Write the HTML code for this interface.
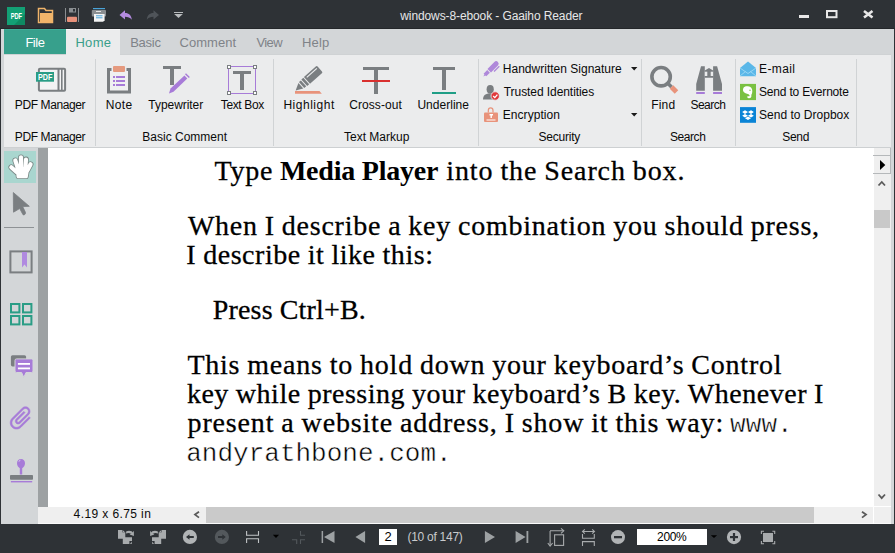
<!DOCTYPE html>
<html><head><meta charset="utf-8"><style>
html,body{margin:0;padding:0;width:895px;height:553px;overflow:hidden;background:#d3d6d8}
body>div{position:absolute}
.t{white-space:pre}
svg{position:absolute;left:0;top:0}
</style></head><body>
<div style="left:0px;top:0px;width:895px;height:28px;background:#2e3236;"></div>
<div style="left:0px;top:28px;width:895px;height:1px;background:#24272a;"></div>
<div style="left:0px;top:29px;width:895px;height:524px;background:#d3d6d8;"></div>
<div style="left:0px;top:29px;width:1px;height:524px;background:#2e3236;"></div>
<div style="left:894px;top:29px;width:1px;height:524px;background:#2e3236;"></div>
<div style="left:4px;top:29px;width:62px;height:26px;background:#37a08c;"></div>
<div style="left:4px;top:29px;width:62px;height:1px;background:#3fae98;"></div>
<div style="left:66px;top:29px;width:54px;height:26px;background:#ebeced;"></div>
<div style="left:66px;top:29px;width:54px;height:1px;background:#f6f6f7;"></div>
<div style="left:4px;top:54px;width:887px;height:1px;background:#cfd2d4;"></div>
<div style="left:66px;top:54px;width:54px;height:1px;background:#ebeced;"></div>
<div style="left:4px;top:55px;width:887px;height:92px;background:#ebeced;"></div>
<div style="left:4px;top:147px;width:887px;height:1px;background:#cdd0d2;"></div>
<div style="left:95px;top:59px;width:1px;height:87px;background:#d0d3d5;"></div>
<div style="left:273px;top:59px;width:1px;height:87px;background:#d0d3d5;"></div>
<div style="left:478px;top:59px;width:1px;height:87px;background:#d0d3d5;"></div>
<div style="left:641px;top:59px;width:1px;height:87px;background:#d0d3d5;"></div>
<div style="left:735px;top:59px;width:1px;height:87px;background:#d0d3d5;"></div>
<div style="left:856px;top:59px;width:1px;height:87px;background:#d0d3d5;"></div>
<div style="left:4px;top:148px;width:34px;height:376px;background:#d3d6d8;"></div>
<div style="left:4px;top:151px;width:32px;height:32px;background:#a9d6cf;"></div>
<div style="left:4px;top:227px;width:30px;height:1px;background:#8e9295;"></div>
<div style="left:38px;top:148px;width:10px;height:359px;background:#9da1a3;"></div>
<div style="left:48px;top:148px;width:826px;height:359px;background:#ffffff;"></div>
<div style="left:874px;top:148px;width:17px;height:359px;background:#efefef;"></div>
<div style="left:873px;top:155px;width:17px;height:1px;background:#b5b8ba;"></div>
<div style="left:873px;top:173px;width:17px;height:1px;background:#b5b8ba;"></div>
<div style="left:890px;top:148px;width:1px;height:26px;background:#b5b8ba;"></div>
<div style="left:874px;top:210px;width:16px;height:18px;background:#c9c9c9;"></div>
<div style="left:38px;top:507px;width:853px;height:17px;background:#fafafa;"></div>
<div style="left:38px;top:507px;width:836px;height:16px;background:#efefef;"></div>
<div style="left:206px;top:507px;width:608px;height:16px;background:#cacaca;"></div>
<div style="left:874px;top:507px;width:17px;height:16px;background:#efefef;"></div>
<div style="left:873px;top:507px;width:1px;height:17px;background:#ffffff;"></div>
<div style="left:874px;top:506px;width:17px;height:1px;background:#ffffff;"></div>
<div style="left:0px;top:524px;width:895px;height:29px;background:#2e3236;"></div>
<div style="left:379px;top:529px;width:18px;height:16px;background:#ffffff;"></div>
<div style="left:637px;top:529px;width:70px;height:16px;background:#ffffff;"></div>
<div class="t" style="left:400.3px;top:9.1px;font-family:'Liberation Sans';font-size:12px;line-height:15px;letter-spacing:-0.107px;word-spacing:0px;color:#e6e7e8;font-weight:normal;">windows-8-ebook - Gaaiho Reader</div>
<div class="t" style="left:25.4px;top:34.8px;font-family:'Liberation Sans';font-size:13px;line-height:16px;letter-spacing:-0.467px;word-spacing:0px;color:#ffffff;font-weight:normal;">File</div>
<div class="t" style="left:75.4px;top:34.9px;font-family:'Liberation Sans';font-size:13px;line-height:16px;letter-spacing:0.333px;word-spacing:0px;color:#3a9e8a;font-weight:normal;">Home</div>
<div class="t" style="left:130.2px;top:35.0px;font-family:'Liberation Sans';font-size:13px;line-height:16px;letter-spacing:-0.25px;word-spacing:0px;color:#7f8388;font-weight:normal;">Basic</div>
<div class="t" style="left:179.5px;top:35.0px;font-family:'Liberation Sans';font-size:13px;line-height:16px;letter-spacing:0.033px;word-spacing:0px;color:#7f8388;font-weight:normal;">Comment</div>
<div class="t" style="left:256.5px;top:35.0px;font-family:'Liberation Sans';font-size:13px;line-height:16px;letter-spacing:-0.6px;word-spacing:0px;color:#7f8388;font-weight:normal;">View</div>
<div class="t" style="left:302.1px;top:35.0px;font-family:'Liberation Sans';font-size:13px;line-height:16px;letter-spacing:0.133px;word-spacing:0px;color:#7f8388;font-weight:normal;">Help</div>
<div class="t" style="left:14.8px;top:97.7px;font-family:'Liberation Sans';font-size:12px;line-height:15px;letter-spacing:-0.4px;word-spacing:0px;color:#0a0a0a;font-weight:normal;">PDF Manager</div>
<div class="t" style="left:105.7px;top:97.7px;font-family:'Liberation Sans';font-size:12px;line-height:15px;letter-spacing:0.4px;word-spacing:0px;color:#0a0a0a;font-weight:normal;">Note</div>
<div class="t" style="left:148.3px;top:97.7px;font-family:'Liberation Sans';font-size:12px;line-height:15px;letter-spacing:-0.044px;word-spacing:0px;color:#0a0a0a;font-weight:normal;">Typewriter</div>
<div class="t" style="left:220.8px;top:97.7px;font-family:'Liberation Sans';font-size:12px;line-height:15px;letter-spacing:-0.371px;word-spacing:0px;color:#0a0a0a;font-weight:normal;">Text Box</div>
<div class="t" style="left:283.4px;top:97.7px;font-family:'Liberation Sans';font-size:12px;line-height:15px;letter-spacing:0.525px;word-spacing:0px;color:#0a0a0a;font-weight:normal;">Highlight</div>
<div class="t" style="left:349.3px;top:97.7px;font-family:'Liberation Sans';font-size:12px;line-height:15px;letter-spacing:0.05px;word-spacing:0px;color:#0a0a0a;font-weight:normal;">Cross-out</div>
<div class="t" style="left:417.4px;top:97.7px;font-family:'Liberation Sans';font-size:12px;line-height:15px;letter-spacing:0.025px;word-spacing:0px;color:#0a0a0a;font-weight:normal;">Underline</div>
<div class="t" style="left:651.2px;top:97.7px;font-family:'Liberation Sans';font-size:12px;line-height:15px;letter-spacing:0.2px;word-spacing:0px;color:#0a0a0a;font-weight:normal;">Find</div>
<div class="t" style="left:690.4px;top:97.7px;font-family:'Liberation Sans';font-size:12px;line-height:15px;letter-spacing:-0.48px;word-spacing:0px;color:#0a0a0a;font-weight:normal;">Search</div>
<div class="t" style="left:502.8px;top:62.1px;font-family:'Liberation Sans';font-size:12px;line-height:15px;letter-spacing:0.01px;word-spacing:0px;color:#0a0a0a;font-weight:normal;">Handwritten Signature</div>
<div class="t" style="left:503.8px;top:85.2px;font-family:'Liberation Sans';font-size:12px;line-height:15px;letter-spacing:-0.071px;word-spacing:0px;color:#0a0a0a;font-weight:normal;">Trusted Identities</div>
<div class="t" style="left:502.8px;top:108.0px;font-family:'Liberation Sans';font-size:12px;line-height:15px;letter-spacing:0.044px;word-spacing:0px;color:#0a0a0a;font-weight:normal;">Encryption</div>
<div class="t" style="left:759.0px;top:61.9px;font-family:'Liberation Sans';font-size:12px;line-height:15px;letter-spacing:0.4px;word-spacing:0px;color:#0a0a0a;font-weight:normal;">E-mail</div>
<div class="t" style="left:759.0px;top:84.8px;font-family:'Liberation Sans';font-size:12px;line-height:15px;letter-spacing:-0.187px;word-spacing:0px;color:#0a0a0a;font-weight:normal;">Send to Evernote</div>
<div class="t" style="left:759.0px;top:107.5px;font-family:'Liberation Sans';font-size:12px;line-height:15px;letter-spacing:0.014px;word-spacing:0px;color:#0a0a0a;font-weight:normal;">Send to Dropbox</div>
<div class="t" style="left:14.8px;top:129.5px;font-family:'Liberation Sans';font-size:12px;line-height:15px;letter-spacing:-0.4px;word-spacing:0px;color:#0a0a0a;font-weight:normal;">PDF Manager</div>
<div class="t" style="left:142.3px;top:129.5px;font-family:'Liberation Sans';font-size:12px;line-height:15px;letter-spacing:0.0px;word-spacing:0px;color:#0a0a0a;font-weight:normal;">Basic Comment</div>
<div class="t" style="left:344.0px;top:129.5px;font-family:'Liberation Sans';font-size:12px;line-height:15px;letter-spacing:0.0px;word-spacing:0px;color:#0a0a0a;font-weight:normal;">Text Markup</div>
<div class="t" style="left:538.4px;top:129.5px;font-family:'Liberation Sans';font-size:12px;line-height:15px;letter-spacing:-0.2px;word-spacing:0px;color:#0a0a0a;font-weight:normal;">Security</div>
<div class="t" style="left:670.0px;top:129.5px;font-family:'Liberation Sans';font-size:12px;line-height:15px;letter-spacing:-0.44px;word-spacing:0px;color:#0a0a0a;font-weight:normal;">Search</div>
<div class="t" style="left:782.3px;top:129.5px;font-family:'Liberation Sans';font-size:12px;line-height:15px;letter-spacing:-0.333px;word-spacing:0px;color:#0a0a0a;font-weight:normal;">Send</div>
<div class="t" style="left:73.6px;top:506.8px;font-family:'Liberation Sans';font-size:12px;line-height:15px;letter-spacing:0.4px;word-spacing:0px;color:#0a0a0a;font-weight:normal;">4.19 x 6.75 in</div>
<div class="t" style="left:384.5px;top:529.0px;font-family:'Liberation Sans';font-size:13px;line-height:16px;letter-spacing:0px;word-spacing:0px;color:#000000;font-weight:normal;">2</div>
<div class="t" style="left:407.4px;top:530.0px;font-family:'Liberation Sans';font-size:12px;line-height:15px;letter-spacing:-0.26px;word-spacing:0px;color:#c9cbcd;font-weight:normal;">(10 of 147)</div>
<div class="t" style="left:657.1px;top:529.5px;font-family:'Liberation Sans';font-size:12px;line-height:15px;letter-spacing:-0.333px;word-spacing:0px;color:#000000;font-weight:normal;">200%</div>
<div class="t" style="left:214.5px;top:152.5px;font-family:'Liberation Serif';font-size:28px;line-height:35px;letter-spacing:0.8px;word-spacing:0px;color:#000000;font-weight:normal;-webkit-text-stroke:0.3px #000;">Type</div>
<div class="t" style="left:279.9px;top:152.5px;font-family:'Liberation Serif';font-size:28px;line-height:35px;letter-spacing:-0.218px;word-spacing:0px;color:#000000;font-weight:bold;">Media Player</div>
<div class="t" style="left:446.3px;top:152.5px;font-family:'Liberation Serif';font-size:28px;line-height:35px;letter-spacing:0.89px;word-spacing:-0.89px;color:#000000;font-weight:normal;-webkit-text-stroke:0.3px #000;">into the Search box.</div>
<div class="t" style="left:187.9px;top:208.1px;font-family:'Liberation Serif';font-size:28px;line-height:35px;letter-spacing:0.753px;word-spacing:-0.753px;color:#000000;font-weight:normal;-webkit-text-stroke:0.3px #000;">When I describe a key combination you should press,</div>
<div class="t" style="left:186.3px;top:237.0px;font-family:'Liberation Serif';font-size:28px;line-height:35px;letter-spacing:0.54px;word-spacing:-0.54px;color:#000000;font-weight:normal;-webkit-text-stroke:0.3px #000;">I describe it like this:</div>
<div class="t" style="left:212.7px;top:292.0px;font-family:'Liberation Serif';font-size:28px;line-height:35px;letter-spacing:0.18px;word-spacing:-0.18px;color:#000000;font-weight:normal;-webkit-text-stroke:0.3px #000;">Press Ctrl+B.</div>
<div class="t" style="left:187.4px;top:346.5px;font-family:'Liberation Serif';font-size:28px;line-height:35px;letter-spacing:0.778px;word-spacing:-0.778px;color:#000000;font-weight:normal;-webkit-text-stroke:0.3px #000;">This means to hold down your keyboard’s Control</div>
<div class="t" style="left:186.9px;top:375.6px;font-family:'Liberation Serif';font-size:28px;line-height:35px;letter-spacing:0.516px;word-spacing:-0.516px;color:#000000;font-weight:normal;-webkit-text-stroke:0.3px #000;">key while pressing your keyboard’s B key. Whenever I</div>
<div class="t" style="left:187.6px;top:404.5px;font-family:'Liberation Serif';font-size:28px;line-height:35px;letter-spacing:0.837px;word-spacing:-0.837px;color:#000000;font-weight:normal;-webkit-text-stroke:0.3px #000;">present a website address, I show it this way:</div>
<div class="t" style="left:730.1px;top:408.5px;font-family:'Liberation Mono';font-size:26px;line-height:32px;letter-spacing:0.067px;word-spacing:0px;color:#000;font-weight:normal;-webkit-text-stroke:0.45px #fff;">www.</div>
<div class="t" style="left:186.2px;top:437.5px;font-family:'Liberation Mono';font-size:26px;line-height:32px;letter-spacing:0.013px;word-spacing:0px;color:#000;font-weight:normal;-webkit-text-stroke:0.45px #fff;">andyrathbone.com.</div>
<svg width="895" height="553" viewBox="0 0 895 553">
<rect x="7" y="7" width="18" height="18" fill="#13a075"/><path d="M14 25 L25 14 L25 25 Z" fill="#0e8a62"/>
<text x="10.7" y="19" font-family="Liberation Sans" font-size="9.6" font-weight="bold" fill="#fff" textLength="11.4" lengthAdjust="spacingAndGlyphs">PDF</text>
<path d="M38.5 8.5 H44.5 L46 10.5 H52.5 V22.5 H38.5 Z" fill="none" stroke="#f0b46a" stroke-width="1.5"/><rect x="40" y="13" width="12" height="9" fill="#f0b46a"/>
<path d="M65.5 8 V22 M78.5 8 V22" stroke="#8a8e91" stroke-width="1"/><rect x="69" y="8" width="7" height="4.5" fill="#8a8e91"/><rect x="73" y="9" width="2" height="2.5" fill="#2e3236"/><rect x="67" y="16.8" width="10" height="5.3" rx="1" fill="#e8917a"/>
<rect x="93" y="8" width="12" height="1.2" fill="#4aa3d8"/><rect x="91.8" y="10" width="14.2" height="6.5" rx="0.8" fill="#8a8e91"/><rect x="96" y="11" width="5" height="1" fill="#e6e6e6"/><path d="M94 14 H104.6 V20.3 L103.1 21.8 H94 Z" fill="#f4f4f4"/><rect x="96" y="15.3" width="6.5" height="1" fill="#4aa3d8"/><rect x="96" y="17.3" width="6.5" height="1" fill="#4aa3d8"/>
<path d="M119.5 15 L125 10.3 V13 C129 13 131.5 15.5 131.8 19.8 C130 17.5 128 16.8 125 16.8 V19.5 Z" fill="#b48be0"/>
<path d="M159 15 L153.5 10.3 V13 C149.5 13 147 15.5 146.8 19.8 C148.5 17.5 150.5 16.8 153.5 16.8 V19.5 Z" fill="#4f5459"/>
<rect x="174" y="12" width="9" height="1" fill="#b8bbbd"/><path d="M174.2 14 H182.8 L178.5 18 Z" fill="#b8bbbd"/>
<rect x="799" y="15" width="10" height="3" fill="#e8e8e8"/><rect x="827" y="11" width="9.5" height="6.2" fill="none" stroke="#e8e8e8" stroke-width="2"/>
<path d="M864 11 L872.5 17.5 M872.5 11 L864 17.5" stroke="#e8e8e8" stroke-width="2.6"/>
<rect x="38.9" y="68.8" width="26.2" height="22" rx="1" fill="#f3f3f4" stroke="#7a7e81" stroke-width="2"/><rect x="57.5" y="69" width="2" height="21" fill="#7a7e81"/><rect x="61" y="69" width="1.6" height="21" fill="#7a7e81"/>
<rect x="36" y="72" width="18" height="9.7" fill="#2a9d86"/><text x="38" y="80" font-family="Liberation Sans" font-size="8.8" font-weight="bold" fill="#fff" textLength="14.4" lengthAdjust="spacingAndGlyphs">PDF</text>
<path d="M111.5 69.5 H108.5 V92 H129.5 V69.5 H126.5" fill="#f0f0f1" stroke="#7a7e81" stroke-width="3"/><rect x="113" y="66" width="12" height="6" rx="1" fill="#e59a7f"/>
<rect x="113" y="76" width="2" height="2" fill="#a77bd8"/><rect x="116" y="76" width="9" height="2" fill="#a77bd8"/>
<rect x="113" y="80" width="2" height="2" fill="#a77bd8"/><rect x="116" y="80" width="9" height="2" fill="#a77bd8"/>
<rect x="113" y="84" width="2" height="2" fill="#a77bd8"/><rect x="116" y="84" width="9" height="2" fill="#a77bd8"/>
<rect x="163" y="66" width="18" height="3" fill="#7a7e81"/><rect x="170" y="66" width="4" height="19" fill="#7a7e81"/>
<path d="M169 93.6 L170.5 88.5 L184.5 75.5 L187.3 78.5 L173.5 91.8 Z" fill="#a77bd8"/><path d="M186 73.3 L189.8 77 L188.8 78 L185 74.3 Z" fill="#a77bd8"/>
<rect x="228.5" y="66.5" width="27" height="27" fill="none" stroke="#a77bd8" stroke-width="1"/>
<rect x="227.5" y="65.5" width="3" height="3" fill="#fff" stroke="#7a7e81" stroke-width="1"/>
<rect x="253.5" y="65.5" width="3" height="3" fill="#fff" stroke="#7a7e81" stroke-width="1"/>
<rect x="227.5" y="91.5" width="3" height="3" fill="#fff" stroke="#7a7e81" stroke-width="1"/>
<rect x="253.5" y="91.5" width="3" height="3" fill="#fff" stroke="#7a7e81" stroke-width="1"/>
<rect x="233" y="71" width="18" height="3" fill="#7a7e81"/><rect x="240" y="71" width="4" height="19" fill="#7a7e81"/>
<path d="M295 91 H319.5 L321.8 93.8 H295 Z" fill="#e8937b"/>
<g transform="translate(295.6,90.4) rotate(-41.5)" fill="#7a7e81"><path d="M0 0 L7 -3.6 V3.6 Z"/><rect x="8" y="-4" width="2.6" height="8"/><rect x="11.6" y="-4.4" width="2.6" height="8.8"/><path d="M15.2 -4.6 H31 Q32.3 -4.6 32.3 -3.3 V3.3 Q32.3 4.6 31 4.6 H15.2 Z"/><rect x="17" y="-3" width="13.5" height="1.2" fill="#ebeced"/></g>
<rect x="363" y="67" width="26" height="3" fill="#7a7e81"/><rect x="374" y="67" width="4" height="27" fill="#7a7e81"/><rect x="362" y="80" width="28" height="2" fill="#d9302f"/>
<rect x="433" y="67" width="22" height="3" fill="#7a7e81"/><rect x="442" y="67" width="4" height="23" fill="#7a7e81"/><rect x="432" y="92" width="24" height="2" fill="#1f9e86"/>
<g transform="translate(483.3,76.6) rotate(-45) scale(0.93)" opacity="0.88"><path d="M0 0 L3 -0.8 V0.8 Z" fill="#a77bd8"/><rect x="2.5" y="-2" width="5.5" height="4" fill="#a77bd8"/><path d="M9 -2.7 H19.5 A2.7 2.7 0 0 1 19.5 2.7 H9 Z" fill="#a77bd8"/><rect x="12" y="3.6" width="8" height="1.4" fill="#a77bd8"/></g>
<ellipse cx="490.2" cy="89.3" rx="3.6" ry="4.4" fill="#7a7e81"/><path d="M483 99.5 C483 95 486 93.5 490 93.5 C494 93.5 496 95 496 99.5 Z" fill="#7a7e81"/><circle cx="495.2" cy="96" r="4.2" fill="#e0383b" stroke="#ebeced" stroke-width="0.8"/><path d="M493.2 96 L494.8 97.6 L497.4 94.6" fill="none" stroke="#fff" stroke-width="1.3"/>
<path d="M488.3 112.5 V110.5 C488.3 107 493 107 493 110.5 V112.5" fill="none" stroke="#e8937b" stroke-width="1.2"/><rect x="484" y="112.5" width="14" height="9.5" rx="1" fill="#e8937b"/><rect x="489.5" y="114" width="3.5" height="1.5" fill="#fff"/><rect x="490.5" y="115" width="1.4" height="3" fill="#fff"/><rect x="486.5" y="119.5" width="9" height="1" fill="#fff"/>
<path d="M631 67 H637.4 L634.2 70.5 Z M631 113 H637.4 L634.2 116.5 Z" fill="#1a1a1a"/>
<circle cx="661.1" cy="76.7" r="9.2" fill="none" stroke="#7a7e81" stroke-width="3.6"/><path d="M667 82.5 L671.5 87" stroke="#7a7e81" stroke-width="3.5"/><path d="M671.5 87 L676.5 92" stroke="#e8937b" stroke-width="5"/>
<path d="M701 66.2 H704.8 V90.8 H696.2 V84 Z M717.1 66.2 H713.1 V90.8 H722 V84 Z" fill="#7a7e81"/><path d="M704.8 70.5 L709 68 L713.1 70.5 V77.7 H704.8 Z" fill="#7a7e81"/><rect x="704.8" y="71.7" width="2.5" height="4.3" fill="#ebeced"/><rect x="710.7" y="71.7" width="2.4" height="4.3" fill="#ebeced"/><rect x="696.2" y="92" width="8.6" height="2" fill="#a77bd8"/><rect x="713.1" y="92" width="8.9" height="2" fill="#a77bd8"/>
<path d="M740 68 L748 61.6 L756 68 V76.2 H740 Z" fill="#5ab7e8"/><path d="M740 68 L748 73.5 L756 68 M740 76 L745.5 71.5 M756 76 L750.5 71.5" fill="none" stroke="#a6dcf5" stroke-width="0.8"/>
<rect x="740" y="83.9" width="16" height="16.2" fill="#7ac142"/><path d="M743.3 88.2 C744 86.4 746 86 748 86.2 C751 86.5 752.3 88.5 752.3 91 C752.3 93 751.8 94 751.3 95 C751.8 96.8 751 98.2 749 98.2 C747.3 98.2 746.8 96.8 747.8 96 C748.6 96.3 749.6 96.5 749.6 95.4 C749.2 94.5 748 94 747 93.8 C745 93.5 743.2 92 742.9 90 Z" fill="#ffffff"/><circle cx="750" cy="90.3" r="0.7" fill="#7ac142"/>
<rect x="740" y="107.1" width="16" height="15.7" fill="#0a84d6"/><path transform="translate(748,115) scale(0.86) translate(-748,-115)" d="M744.5 109.5 L748 111.5 L744.5 113.7 L741.2 111.5 Z M751.5 109.5 L754.8 111.5 L751.5 113.7 L748 111.5 Z M744.5 113.7 L748 116 L744.5 118 L741.2 116 Z M751.5 113.7 L754.8 116 L751.5 118 L748 116 Z M744.5 118.7 L748 116.8 L751.5 118.7 L748 120.8 Z" fill="#fff"/>
<g stroke="#7a8886" fill="#7a8886"><path d="M21 157.3 L21 168 M26 159.5 L25.3 168 M15.3 160.5 L18 168.5 M30.6 164.3 L27.6 170 M11.3 167.3 L16.5 172" stroke-linecap="round" fill="none" stroke-width="5.8"/><path d="M15.5 167.5 L29.5 166.5 L27.8 177 Q27.6 178.2 26.5 178.2 H18 Q16.9 178.2 16.6 177 Z" stroke-linejoin="round" stroke-width="1.6"/></g>
<g stroke="#ffffff" fill="#ffffff"><path d="M21 157.3 L21 168 M26 159.5 L25.3 168 M15.3 160.5 L18 168.5 M30.6 164.3 L27.6 170 M11.3 167.3 L16.5 172" stroke-linecap="round" fill="none" stroke-width="4.2"/><path d="M15.5 167.5 L29.5 166.5 L27.8 177 Q27.6 178.2 26.5 178.2 H18 Q16.9 178.2 16.6 177 Z" stroke-linejoin="round" stroke-width="0"/></g>
<path d="M13.3 192.5 L29.3 206.3 L22.7 206.6 L25.5 212.5 C26 213.8 24.2 215.6 23 214.7 L19.7 208.5 L13.5 212.2 Z" fill="#7a7e81" stroke="#7a7e81" stroke-width="0.8" stroke-linejoin="round"/>
<rect x="10.4" y="251.4" width="21.2" height="21" fill="none" stroke="#7a7e81" stroke-width="2"/><path d="M22 252 H27 V267.5 L24.5 264.5 L22 267.5 Z" fill="#b08ae0"/>
<rect x="11" y="304" width="8.4" height="8.4" fill="none" stroke="#2a9d86" stroke-width="2"/>
<rect x="23" y="304" width="8.4" height="8.4" fill="none" stroke="#2a9d86" stroke-width="2"/>
<rect x="11" y="316" width="8.4" height="8.4" fill="none" stroke="#2a9d86" stroke-width="2"/>
<rect x="23" y="316" width="8.4" height="8.4" fill="none" stroke="#2a9d86" stroke-width="2"/>
<rect x="10.9" y="355.2" width="15.2" height="11.2" rx="1.6" fill="#7a7e81"/><path d="M16.5 358.9 H31.5 Q33 358.9 33 360.4 V371 Q33 372.5 31.5 372.5 H26 L23.8 377.4 L21.6 372.5 H16.5 Q15 372.5 15 371 V360.4 Q15 358.9 16.5 358.9 Z" fill="#a77bd8" stroke="#d3d6d8" stroke-width="1"/><rect x="17.9" y="363" width="12.1" height="1.8" fill="#fff"/><rect x="17.9" y="367.5" width="12.1" height="1.8" fill="#fff"/>
<path transform="translate(21,418.3) rotate(45) scale(1.15) translate(-12.5,-12)" d="M16.5 6v11.5c0 2.21-1.79 4-4 4s-4-1.790-4-4V5c0-1.38 1.12-2.5 2.5-2.5s2.5 1.12 2.5 2.5v10.5c0 .55-.45 1-1 1s-1-.45-1-1V6H10v9.5c0 1.38 1.12 2.5 2.5 2.5s2.5-1.12 2.5-2.5V5c0-2.21-1.79-4-4-4S7 2.790 7 5v12.5c0 3.04 2.46 5.5 5.5 5.5s5.5-2.46 5.5-5.5V6h-1.5z" fill="#a77bd8" stroke="#a77bd8" stroke-width="0.45"/>
<path d="M21 459 C23.5 459 25 460.8 25 463.3 C25 465.5 23.8 467.3 22.2 468.3 V474.5 H19.8 V468.3 C18.2 467.3 17 465.5 17 463.3 C17 460.8 18.5 459 21 459 Z" fill="#a77bd8"/><path d="M19 461.5 Q19.3 460.5 20.3 460.3" stroke="#e9dcf6" stroke-width="0.9" fill="none"/><rect x="10" y="475.1" width="23" height="4.7" rx="0.8" fill="#7a7e81"/><rect x="10.9" y="481" width="21.3" height="1.4" fill="#a77bd8"/>
<path d="M880 160 L885.3 165 L880 170 Z" fill="#000"/>
<path d="M878.5 185.5 L881.8 182 L885 185.5" fill="none" stroke="#5a5a5a" stroke-width="1.8"/>
<path d="M878.5 494.5 L881.7 498.2 L885 494.5" fill="none" stroke="#5a5a5a" stroke-width="1.8"/>
<path d="M862 511.8 L866 514.6 L862 517.6" fill="none" stroke="#5a5a5a" stroke-width="1.8"/>
<path d="M199 511.8 L195 514.6 L199 517.6" fill="none" stroke="#5a5a5a" stroke-width="1.8"/>
<g ><path d="M118 530.1 H122.2 V532.2 H125.3 V537.3 H132 V541 H129.4 V544 H122.8 V538.7 H118 Z" fill="#a8abad"/><path d="M122.6 530.1 L124.8 532 H122.6 Z M130 543.9 L131.8 541.6 V543.9 Z" fill="#a8abad"/><path d="M126.1 531.4 Q129 530.2 131.6 531.3 L132.6 532.2 L131.1 533.7 Q129 532.7 126.1 533.4 Z" fill="#a8abad"/><path d="M129.7 534.5 L133.9 530.9 V536 Z" fill="#a8abad"/></g>
<g transform="translate(284,0) scale(-1,1)"><path d="M118 530.1 H122.2 V532.2 H125.3 V537.3 H132 V541 H129.4 V544 H122.8 V538.7 H118 Z" fill="#a8abad"/><path d="M122.6 530.1 L124.8 532 H122.6 Z M130 543.9 L131.8 541.6 V543.9 Z" fill="#a8abad"/><path d="M126.1 531.4 Q129 530.2 131.6 531.3 L132.6 532.2 L131.1 533.7 Q129 532.7 126.1 533.4 Z" fill="#a8abad"/><path d="M129.7 534.5 L133.9 530.9 V536 Z" fill="#a8abad"/></g>
<circle cx="189.9" cy="536.9" r="7.1" fill="#b1b4b6"/><path d="M186 537 L189.5 534.3 V536.1 H193.8 V537.9 H189.5 V539.7 Z" fill="#2e3236"/>
<circle cx="221.9" cy="536.9" r="7.1" fill="#53585c"/><path d="M225.8 537 L222.3 534.3 V536.1 H218 V537.9 H222.3 V539.7 Z" fill="#2e3236"/>
<path d="M246.6 531 V535.6 M246.6 538.3 V543 M258.5 531 V535.6 M258.5 538.3 V543 M246 535.3 H259 M246 538.8 H259" stroke="#c0c3c5" stroke-width="1.1"/>
<path d="M272.8 534.8 H279.1 L276 538.1 Z M710.8 535.3 H717.1 L714 538.1 Z" fill="#000"/>
<path d="M300.5 531 V535.3 H305 M292 539.7 H296.7 V544 M300.5 544 V539.7 H305" fill="none" stroke="#53585c" stroke-width="1.1"/>
<rect x="321.6" y="531" width="1.5" height="12" fill="#9da1a3"/><path d="M324 537 L334.5 531 V543 Z M355.4 537 L365.1 531 V543 Z M495 537 L484.9 531 V543 Z M525.6 537 L515.6 531 V543 Z" fill="#9da1a3"/><rect x="526.5" y="531" width="1.8" height="12" fill="#9da1a3"/>
<path d="M550.1 531 V545 M550 530.8 H563" fill="none" stroke="#a8abad" stroke-width="1.1"/><path d="M547.8 543 L550.1 546 L552.6 543 M561 528.3 L563.8 530.8 L561 533.3" fill="none" stroke="#a8abad" stroke-width="1.1"/><rect x="554.6" y="534.8" width="9" height="10.6" fill="none" stroke="#a8abad" stroke-width="1.1"/>
<path d="M582.5 531.5 H594.5 M584.8 529.3 L582.5 531.5 L584.8 533.7 M592.2 529.3 L594.5 531.5 L592.2 533.7 M582.5 534 V538.3 H594.3 V534 M582.5 546 V541.6 H594.3 V546" fill="none" stroke="#a8abad" stroke-width="1.1"/>
<circle cx="618" cy="537.1" r="7" fill="#b1b4b6"/><rect x="614" y="536" width="8" height="2.3" fill="#2e3236"/>
<circle cx="734" cy="537.1" r="7.1" fill="#b1b4b6"/><rect x="730" y="536" width="8" height="2.2" fill="#2e3236"/><rect x="732.9" y="533" width="2.2" height="8" fill="#2e3236"/>
<path d="M761.4 534 V531.3 H764 M772.4 531.3 H774.7 V534 M774.7 541 V543.7 H772.4 M764 543.7 H761.4 V541" fill="none" stroke="#a8abad" stroke-width="1.1"/><rect x="763" y="533" width="10" height="9" fill="#a8abad"/>
</svg>
</body></html>
